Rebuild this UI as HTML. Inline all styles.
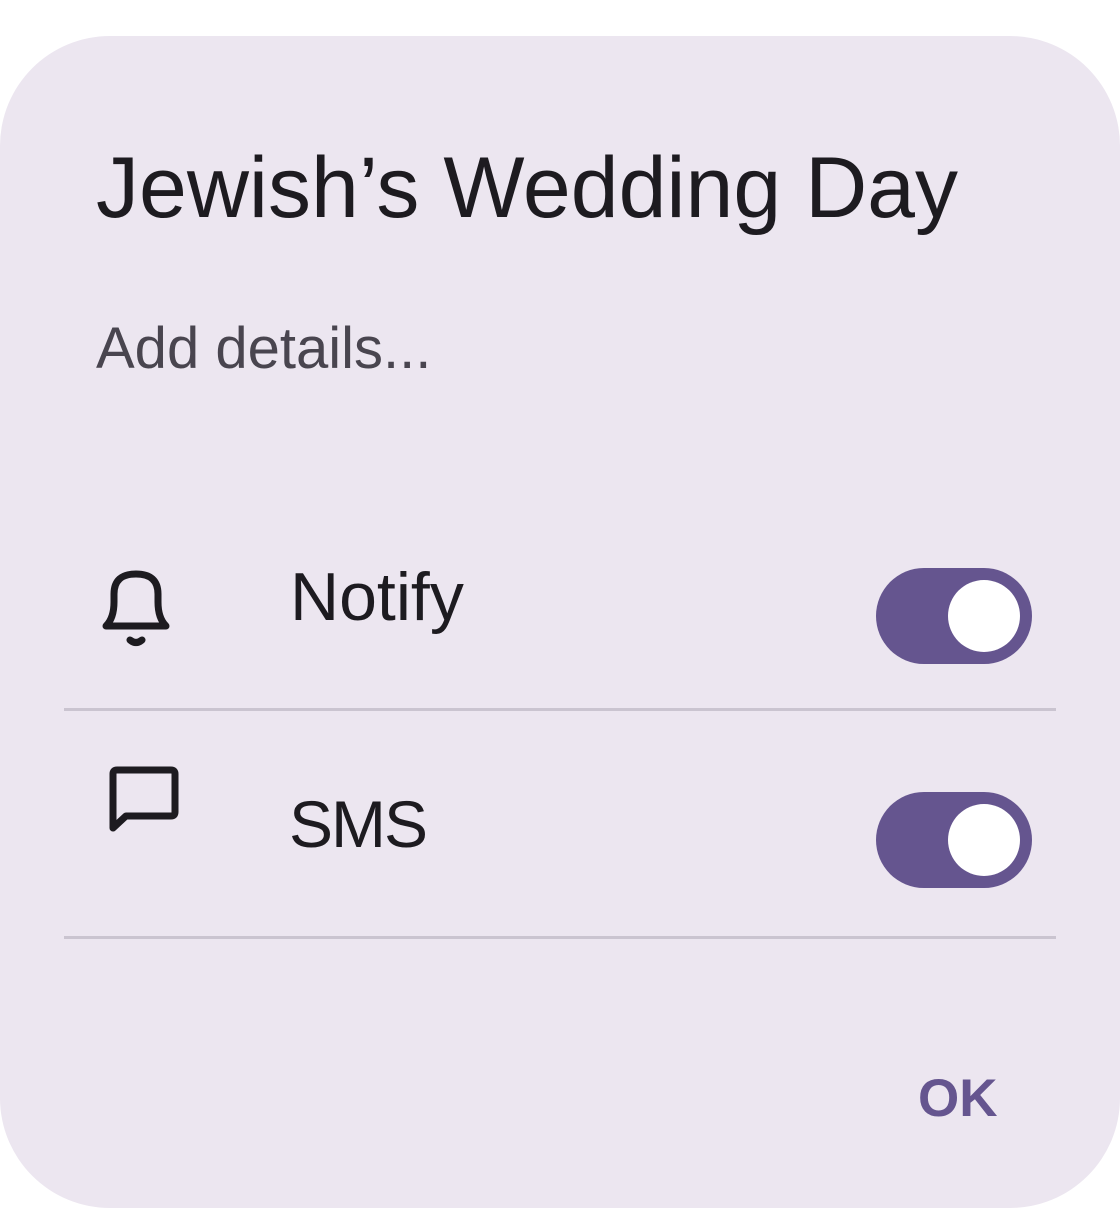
<!DOCTYPE html>
<html><head><style>
html,body{margin:0;padding:0;background:#fff;width:1120px;height:1208px;overflow:hidden;font-family:"Liberation Sans",sans-serif}
.card{position:absolute;left:0;top:36px;width:1120px;height:1172px;background:#ECE6F0;border-radius:110px}
.t{position:absolute;white-space:nowrap;line-height:1}
.div{position:absolute;left:64px;width:992px;height:3px;background:#CAC4D0}
.sw{position:absolute;left:876px;width:156px;height:96px;border-radius:48px;background:#65558F}
.sw::after{content:"";position:absolute;left:72px;top:12px;width:72px;height:72px;border-radius:50%;background:#fff}
</style></head><body>
<div class="card"></div>
<div class="t" style="left:96px;top:145px;font-size:86px;color:#1D1B20">Jewish’s Wedding Day</div>
<div class="t" style="left:96px;top:320px;font-size:58px;color:#49454F">Add details...</div>
<svg style="position:absolute;left:96px;top:566px" width="80" height="84" viewBox="0 0 80 84" fill="none" stroke="#1D1B20" stroke-width="7" stroke-linejoin="round" stroke-linecap="round">
<path d="M10 60 Q18 52 18 36 L18 28 Q18 8 40 8 Q62 8 62 28 L62 36 Q62 52 70 60 Z"/>
<path d="M34 74 Q40 79 46 74"/>
</svg>
<svg style="position:absolute;left:106px;top:762px" width="80" height="80" viewBox="0 0 80 80" fill="none" stroke="#1D1B20" stroke-width="7" stroke-linejoin="round" stroke-linecap="round">
<path d="M7 66 L7 12 Q7 8 11 8 L65 8 Q69 8 69 12 L69 50 Q69 54 65 54 L20 54 Z"/>
</svg>
<div class="t" style="left:290px;top:563px;font-size:68px;color:#1D1B20">Notify</div>
<div class="sw" style="top:568px"></div>
<div class="div" style="top:708px"></div>
<div class="t" style="left:289px;top:791px;font-size:66px;letter-spacing:-2px;color:#1D1B20">SMS</div>
<div class="sw" style="top:792px"></div>
<div class="div" style="top:936px"></div>
<div class="t" style="left:918px;top:1072px;font-size:53px;font-weight:bold;color:#65558F">OK</div>
</body></html>
